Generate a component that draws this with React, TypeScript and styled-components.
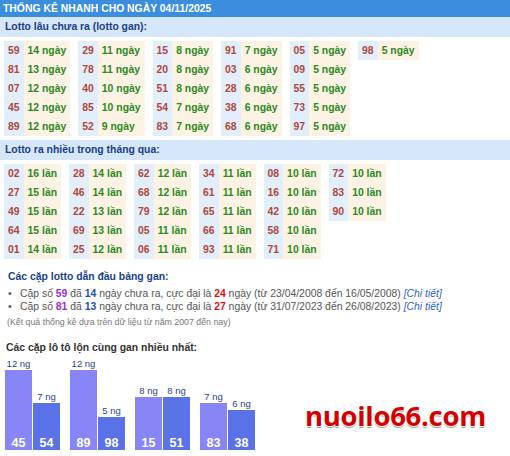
import React from "react";
import styled, { createGlobalStyle } from "styled-components";

const Global = createGlobalStyle`
  html, body { margin: 0; padding: 0; background: #fff; }
  body { font-family: "Liberation Sans", Arial, sans-serif; }
`;

const FS = "10.4px";

const Page = styled.div`
  width: 510px;
  height: 456px;
  overflow: hidden;
  font-family: "Liberation Sans", Arial, sans-serif;
  font-size: ${FS};
`;

const Header = styled.div`
  height: 17px;
  line-height: 18px;
  background: #3b8ede;
  color: #fff;
  font-weight: bold;
  padding-left: 3px;
`;

const SubHeader = styled.div`
  height: 20px;
  line-height: 20px;
  background: #d5e7f9;
  color: #1a3f8a;
  font-weight: bold;
  padding-left: 5px;
  margin-bottom: 4px;
`;

const Groups = styled.div<{ $gap: number }>`
  display: flex;
  align-items: flex-start;
  gap: ${(p) => p.$gap}px;
  padding-left: 4px;
  margin-bottom: 4px;
`;

const Table = styled.div`
  display: grid;
  grid-template-columns: auto auto;
`;

const NumCell = styled.div`
  height: 19px;
  line-height: 19px;
  background: #e3eefb;
  color: #b0463c;
  font-weight: bold;
  padding: 0 4px;
`;

const ValCell = styled.div`
  height: 19px;
  line-height: 19px;
  background: #fdf3e5;
  color: #2b8a1f;
  font-weight: bold;
  padding: 0 4px;
`;

const Summary = styled.div`
  padding: 7px 0 0 8px;
  color: #555;
`;

const SummaryTitle = styled.div`
  color: #1a3f8a;
  font-weight: bold;
  line-height: 13px;
  margin-bottom: 4px;
`;

const Bullet = styled.div`
  display: flex;
  line-height: 13px;
  white-space: nowrap;
`;

const Dot = styled.span`
  width: 12px;
  flex: none;
`;

const Hl = styled.b<{ $c: string }>`
  color: ${(p) => p.$c};
`;

const Link = styled.i`
  color: #2f5fc4;
`;

const Note = styled.div`
  font-size: 8.8px;
  color: #777;
  line-height: 14px;
  margin: 2px 0 0 -1px;
`;

const ChartTitle = styled.div`
  padding: 12px 0 0 6px;
  font-weight: bold;
  color: #333;
  line-height: 13px;
`;

const Bottom = styled.div`
  display: flex;
  align-items: flex-end;
  padding-left: 5px;
`;

const Chart = styled.div`
  display: flex;
  align-items: flex-end;
  gap: 10px;
  height: 96px;
`;

const Pair = styled.div`
  display: flex;
  align-items: flex-end;
  gap: 1px;
`;

const BarCol = styled.div`
  display: flex;
  flex-direction: column;
  align-items: center;
  width: 27px;
`;

const BarLabel = styled.div`
  font-size: 9.5px;
  color: #1f3f94;
  line-height: 13px;
  white-space: nowrap;
`;

const Bar = styled.div<{ $first: boolean }>`
  width: 27px;
  background: ${(p) => (p.$first ? "#8886f6" : "#5a72e8")};
  display: flex;
  align-items: flex-end;
  justify-content: center;
  color: #fff;
  font-weight: bold;
  font-size: 12.5px;
  line-height: 14px;
  box-sizing: border-box;
`;

const Logo = styled.div`
  margin: 0 0 17px 50px;
  font-family: "Open Sans", "Liberation Sans", sans-serif;
  font-weight: bold;
  font-size: 27.5px;
  line-height: 34px;
  letter-spacing: -0.3px;
  color: #d40000;
  text-shadow: 1px 0 0 #fff, -1px 0 0 #fff, 0 1px 0 #fff, 0 -1px 0 #fff,
    0 2px 1px #9a9a9a;
`;

const gan = [
  [["59", "14"], ["81", "13"], ["07", "12"], ["45", "12"], ["89", "12"]],
  [["29", "11"], ["78", "11"], ["40", "10"], ["85", "10"], ["52", "9"]],
  [["15", "8"], ["20", "8"], ["51", "8"], ["54", "7"], ["83", "7"]],
  [["91", "7"], ["03", "6"], ["28", "6"], ["38", "6"], ["68", "6"]],
  [["05", "5"], ["09", "5"], ["55", "5"], ["73", "5"], ["97", "5"]],
  [["98", "5"]],
];

const nhieu = [
  [["02", "16"], ["27", "15"], ["49", "15"], ["64", "15"], ["01", "14"]],
  [["28", "14"], ["46", "14"], ["22", "13"], ["69", "13"], ["25", "12"]],
  [["62", "12"], ["68", "12"], ["79", "12"], ["05", "11"], ["06", "11"]],
  [["34", "11"], ["61", "11"], ["65", "11"], ["66", "11"], ["93", "11"]],
  [["08", "10"], ["16", "10"], ["42", "10"], ["58", "10"], ["71", "10"]],
  [["72", "10"], ["83", "10"], ["90", "10"]],
];

const pairs = [
  [["45", 12], ["54", 7]],
  [["89", 12], ["98", 5]],
  [["15", 8], ["51", 8]],
  [["83", 7], ["38", 6]],
] as [string, number][][];

function Groupset({ data, unit, gap }: { data: string[][][]; unit: string; gap: number }) {
  return (
    <Groups $gap={gap}>
      {data.map((g, i) => (
        <Table key={i}>
          {g.map(([n, v]) => (
            <React.Fragment key={n}>
              <NumCell>{n}</NumCell>
              <ValCell>
                {v} {unit}
              </ValCell>
            </React.Fragment>
          ))}
        </Table>
      ))}
    </Groups>
  );
}

export default function App() {
  return (
    <Page>
      <Global />
      <Header>THỐNG KÊ NHANH CHO NGÀY 04/11/2025</Header>
      <SubHeader>Lotto lâu chưa ra (lotto gan):</SubHeader>
      <Groupset data={gan} unit="ngày" gap={8} />
      <SubHeader>Lotto ra nhiều trong tháng qua:</SubHeader>
      <Groupset data={nhieu} unit="lần" gap={8} />
      <Summary>
        <SummaryTitle>Các cặp lotto dẫn đầu bảng gan:</SummaryTitle>
        <Bullet>
          <Dot>•</Dot>
          <span>
            Cặp số <Hl $c="#9a2fc8">59</Hl> đã <Hl $c="#1d4fa6">14</Hl> ngày chưa ra, cực đại là{" "}
            <Hl $c="#e01010">24</Hl> ngày (từ 23/04/2008 đến 16/05/2008) <Link>[Chi tiết]</Link>
          </span>
        </Bullet>
        <Bullet>
          <Dot>•</Dot>
          <span>
            Cặp số <Hl $c="#9a2fc8">81</Hl> đã <Hl $c="#1d4fa6">13</Hl> ngày chưa ra, cực đại là{" "}
            <Hl $c="#e01010">27</Hl> ngày (từ 31/07/2023 đến 26/08/2023) <Link>[Chi tiết]</Link>
          </span>
        </Bullet>
        <Note>(Kết quả thống kê dựa trên dữ liệu từ năm 2007 đến nay)</Note>
      </Summary>
      <ChartTitle>Các cặp lô tô lộn cùng gan nhiều nhất:</ChartTitle>
      <Bottom>
        <Chart>
          {pairs.map((p, i) => (
            <Pair key={i}>
              {p.map(([n, d], j) => (
                <BarCol key={n}>
                  <BarLabel>{d} ng</BarLabel>
                  <Bar $first={j === 0} style={{ height: Math.round(d * 6.67) }}>
                    {n}
                  </Bar>
                </BarCol>
              ))}
            </Pair>
          ))}
        </Chart>
        <Logo>nuoilo66.com</Logo>
      </Bottom>
    </Page>
  );
}
